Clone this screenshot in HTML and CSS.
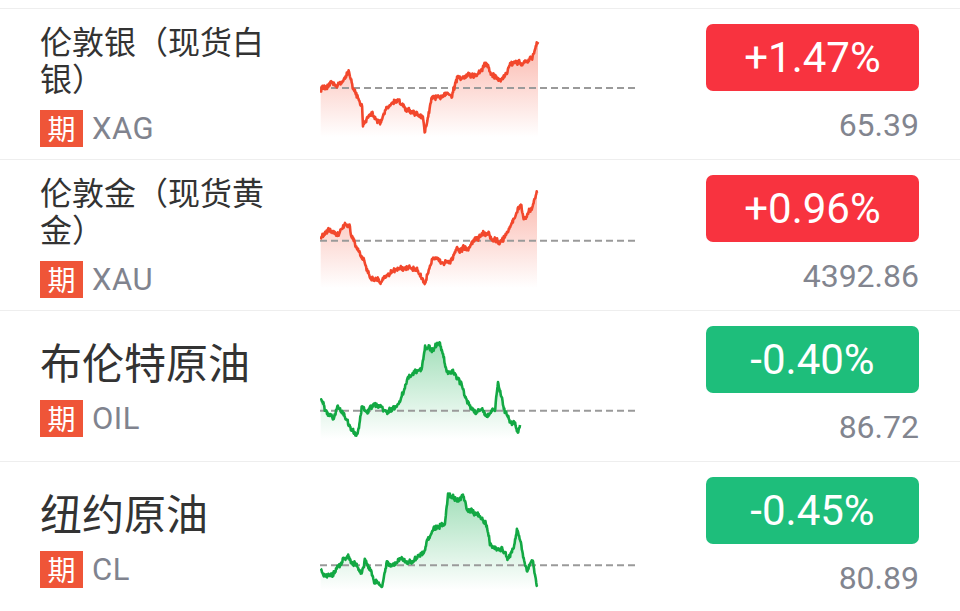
FILE: index.html
```html
<!DOCTYPE html>
<html lang="zh-CN">
<head>
<meta charset="utf-8">
<link rel="stylesheet" href="styles.css">
</head>
<body>
<div class="list">
  <div class="row">
    <div class="info">
      <div class="name">伦敦银（现货白银）</div>
      <div class="code"><span class="tag">期</span><span class="sym">XAG</span></div>
    </div>
    <svg class="spark" data-i="0" viewBox="0 0 320 150"></svg>
    <div class="quote">
      <div class="chg up">+1.47%</div>
      <div class="price">65.39</div>
    </div>
  </div>
  <div class="row">
    <div class="info">
      <div class="name">伦敦金（现货黄金）</div>
      <div class="code"><span class="tag">期</span><span class="sym">XAU</span></div>
    </div>
    <svg class="spark" data-i="1" viewBox="0 0 320 150"></svg>
    <div class="quote">
      <div class="chg up">+0.96%</div>
      <div class="price">4392.86</div>
    </div>
  </div>
  <div class="row">
    <div class="info">
      <div class="name big">布伦特原油</div>
      <div class="code"><span class="tag">期</span><span class="sym">OIL</span></div>
    </div>
    <svg class="spark" data-i="2" viewBox="0 0 320 150"></svg>
    <div class="quote">
      <div class="chg down">-0.40%</div>
      <div class="price">86.72</div>
    </div>
  </div>
  <div class="row">
    <div class="info">
      <div class="name big">纽约原油</div>
      <div class="code"><span class="tag">期</span><span class="sym">CL</span></div>
    </div>
    <svg class="spark" data-i="3" viewBox="0 0 320 150"></svg>
    <div class="quote">
      <div class="chg down">-0.45%</div>
      <div class="price">80.89</div>
    </div>
  </div>
</div>
<script src="app.js"></script>
</body>
</html>
```

FILE: styles.css
```css
html, body {
  margin: 0;
  padding: 0;
  background: #ffffff;
}
body {
  font-family: "Noto Sans CJK SC", "Noto Sans", sans-serif;
  width: 960px;
  height: 611px;
  overflow: hidden;
}
.list {
  padding-top: 8px;
}
.row {
  display: flex;
  align-items: center;
  height: 150px;
  border-top: 1px solid #eeeeee;
  padding: 0 41px 0 40px;
}
.info {
  width: 280px;
  flex: none;
}
.name {
  width: 250px;
  color: #333333;
  font-size: 32px;
  line-height: 37px;
}
.name.big {
  font-size: 42px;
  line-height: 50px;
}
.code {
  display: flex;
  align-items: center;
  margin-top: 14px;
}
.tag {
  width: 43px;
  height: 37px;
  background: #ef5538;
  color: #ffffff;
  font-size: 28px;
  line-height: 37px;
  text-align: center;
}
.sym {
  margin-left: 9px;
  font-family: Roboto, "Noto Sans", sans-serif;
  font-size: 31px;
  letter-spacing: 0.5px;
  color: #80838e;
}
.spark {
  width: 320px;
  height: 150px;
  flex: none;
  display: block;
}
.quote {
  margin-left: auto;
  width: 213px;
  display: flex;
  flex-direction: column;
  align-items: flex-end;
}
.chg {
  width: 213px;
  height: 67px;
  border-radius: 7px;
  color: #ffffff;
  font-family: Roboto, "Noto Sans", sans-serif;
  font-size: 42px;
  display: flex;
  align-items: center;
  justify-content: center;
}
.chg.up {
  background: #f8333f;
}
.chg.down {
  background: #1ebe7b;
}
.price {
  margin-top: 15px;
  font-family: Roboto, "Noto Sans", sans-serif;
  font-size: 32px;
  line-height: 38px;
  color: #82858f;
}
```

FILE: app.js
```js
(function () {
  var charts = [
    { up: true, dash: 79, pts: [[0.7,81],[11.7,72.7],[17,77],[25,69],[29,62],[33,79],[42,98],[43,116],[52,104],[60,114],[67,98],[77,91],[87,101],[97,104],[103,111],[105,124],[108,108],[112,88],[120,86],[132,88],[137,69],[143,71],[150,66],[160,66],[166,54],[170,64],[178,71],[185,68],[190,53],[200,54],[207,51],[212,48],[218,33]] },
    { up: true, dash: 80.7, pts: [[0.7,80],[10,68],[17,75],[23,67],[29,65],[32,77],[38,90],[45,103],[50,117],[60,123],[67,117],[77,108],[87,108],[97,110],[105,123],[112,100],[120,100],[130,102],[137,90],[147,87],[157,78],[166,72],[172,78],[178,82],[183,78],[190,67],[200,45],[204,58],[210,50],[217,33]] },
    { up: false, dash: 99.7, pts: [[0.7,89],[5,99],[13,107],[18,94],[23,104],[30,116],[37,124],[42,96],[47,101],[53,94],[62,96],[67,101],[78,94],[83,82],[88,66],[95,61],[102,56],[105,36],[112,39],[120,32],[123,42],[127,62],[133,59],[140,69],[145,82],[150,96],[157,102],[162,97],[168,104],[175,99],[178,72],[182,89],[185,102],[190,109],[195,112],[198,122],[200,114]] },
    { up: false, dash: 103.3, pts: [[0.7,105],[3,113],[13,111],[20,103],[28,96],[35,103],[42,111],[45,98],[50,108],[55,120],[62,123],[67,100],[73,103],[80,96],[88,103],[97,96],[103,91],[108,78],[113,68],[120,63],[125,60],[128,33],[137,38],[143,35],[147,48],[153,50],[160,55],[167,65],[170,81],[177,88],[182,85],[188,95],[193,88],[197,66],[200,75],[203,95],[207,108],[212,98],[215,111],[217,123]] }
  ];

  function rng(seed) {
    return function () {
      seed |= 0; seed = seed + 0x6D2B79F5 | 0;
      var t = Math.imul(seed ^ seed >>> 15, 1 | seed);
      t = t + Math.imul(t ^ t >>> 7, 61 | t) ^ t;
      return ((t ^ t >>> 14) >>> 0) / 4294967296;
    };
  }

  var svgs = document.querySelectorAll('.spark');
  svgs.forEach(function (svg) {
    var i = +svg.getAttribute('data-i');
    var c = charts[i];
    var r = rng(1234 + i * 77);
    var pts = c.pts;
    var out = [];
    var walk = 0;
    var seg = 0;
    var x0 = pts[0][0], xN = pts[pts.length - 1][0];
    for (var x = x0; x <= xN; x += 0.45) {
      while (seg < pts.length - 2 && x > pts[seg + 1][0]) seg++;
      var a = pts[seg], b = pts[seg + 1];
      var t = (x - a[0]) / (b[0] - a[0]);
      var y = a[1] + (b[1] - a[1]) * t;
      walk = walk * 0.75 + (r() - 0.5) * 2.6;
      y += walk + (r() - 0.5) * 3.6;
      out.push([x, y]);
    }
    out.push([xN, pts[pts.length - 1][1]]);
    var line = out.map(function (p, k) { return (k ? 'L' : 'M') + p[0].toFixed(2) + ' ' + p[1].toFixed(1); }).join('');
    var bottom = 128;
    var area = line + 'L' + xN + ' ' + bottom + 'L' + x0 + ' ' + bottom + 'Z';
    var col = c.up ? '#f2472c' : '#12a843';
    var fillCol = c.up ? '#f5533a' : '#23b35a';
    var gid = 'g' + i;
    svg.innerHTML =
      '<defs><linearGradient id="' + gid + '" x1="0" y1="0" x2="0" y2="1">' +
      '<stop offset="0" stop-color="' + fillCol + '" stop-opacity="0.42"/>' +
      '<stop offset="1" stop-color="' + fillCol + '" stop-opacity="0"/>' +
      '</linearGradient></defs>' +
      '<path d="' + area + '" fill="url(#' + gid + ')"/>' +
      '<line x1="0" y1="' + c.dash + '" x2="318" y2="' + c.dash + '" stroke="#9a9a9a" stroke-width="2" stroke-dasharray="7 4"/>' +
      '<path d="' + line + '" fill="none" stroke="' + col + '" stroke-width="2.6" stroke-linejoin="round"/>';
  });
})();
```
